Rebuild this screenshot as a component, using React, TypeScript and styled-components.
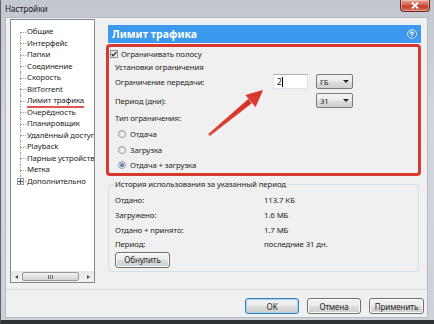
import React from 'react'
import styled, { createGlobalStyle } from 'styled-components'

const GlobalStyle = createGlobalStyle`
  html, body { margin: 0; padding: 0; background: #2e3136; }
  body {
    font-family: "Noto Sans", "Liberation Sans", sans-serif;
    font-size: 7.8px;
    letter-spacing: -0.1px;
    color: #1e1e1e;
  }
  * { box-sizing: border-box; }
`

const sections = [
  'Общие',
  'Интерфейс',
  'Папки',
  'Соединение',
  'Скорость',
  'BitTorrent',
  'Лимит трафика',
  'Очерёдность',
  'Планировщик',
  'Удалённый доступ',
  'Playback',
  'Парные устройства',
  'Метка',
  'Дополнительно',
]

const stats = [
  { label: 'Отдано:', value: '113.7 КБ' },
  { label: 'Загружено:', value: '1.6 МБ' },
  { label: 'Отдано + принято:', value: '1.7 МБ' },
  { label: 'Период:', value: 'последние 31 дн.' },
]

const Window = styled.div`
  position: relative;
  width: 434px;
  height: 324px;
  display: flex;
  flex-direction: column;
  background: linear-gradient(to bottom, #c3c8cf, #d2d7dd 40%, #cdd2d8);
  border-left: 1px solid #5d6269;
  border-bottom: 4px solid #2e3136;
  overflow: hidden;
`

const TitleBar = styled.div`
  height: 17px;
  flex: none;
  display: flex;
  align-items: center;
  padding-left: 4px;
`

const Title = styled.span`
  font-size: 8.3px;
  color: #1b1b1b;
`

const CloseButton = styled.div`
  margin-left: auto;
  margin-right: 4px;
  align-self: flex-start;
  width: 30px;
  height: 12px;
  display: flex;
  align-items: center;
  justify-content: center;
  border: 1px solid #6e2a22;
  border-top: none;
  border-radius: 0 0 4px 4px;
  background: linear-gradient(to bottom, #e8a294, #d1634f 45%, #c0392a 55%, #d9745c);
  box-shadow: inset 0 0 0 1px rgba(255, 255, 255, 0.35);
`

const Body = styled.div`
  flex: 1;
  display: flex;
  padding: 0 6px 2px 4px;
`

const Client = styled.div`
  flex: 1;
  display: flex;
  flex-direction: column;
  background: #f0f0f0;
  border: 1px solid #b4bbc3;
`

const Main = styled.div`
  height: 271px;
  flex: none;
  display: flex;
  gap: 13px;
  padding: 1px 6px 0 4px;
`

const Tree = styled.div`
  width: 85px;
  height: 264px;
  display: flex;
  flex-direction: column;
  background: #fff;
  border: 1px solid #828790;
`

const TreeList = styled.div`
  flex: 1;
  padding: 6px 0 0 9px;
  overflow: hidden;
`

const TreeItem = styled.div`
  height: 11.5px;
  display: flex;
  align-items: stretch;
  white-space: nowrap;
`

const Connector = styled.span<{ $pos: 'first' | 'mid' | 'last' }>`
  position: relative;
  flex: none;
  width: 7px;
  &::before {
    content: '';
    position: absolute;
    left: 0;
    top: ${p => (p.$pos === 'first' ? '50%' : '0')};
    bottom: ${p => (p.$pos === 'last' ? '50%' : '0')};
    border-left: 1px dotted #a3a3a3;
  }
  &::after {
    content: '';
    position: absolute;
    left: 0;
    right: 1px;
    top: 50%;
    border-top: 1px dotted #a3a3a3;
  }
`

const Expander = styled.span`
  position: absolute;
  left: -3px;
  top: 2.5px;
  width: 7px;
  height: 7px;
  z-index: 1;
  display: flex;
  align-items: center;
  justify-content: center;
  background: #fff;
  border: 1px solid #9b9b9b;
`

const TreeLabel = styled.span<{ $marked?: boolean }>`
  line-height: 11.5px;
  text-decoration: ${p => (p.$marked ? 'underline' : 'none')};
  text-decoration-color: #e2574c;
  text-decoration-thickness: 1.5px;
  text-underline-offset: 3px;
`

const ScrollBar = styled.div`
  height: 11px;
  flex: none;
  display: flex;
  align-items: center;
  background: linear-gradient(to bottom, #e6e6e6, #f4f4f4);
`

const ScrollArrow = styled.span<{ $dir: 'left' | 'right' }>`
  width: 11px;
  height: 11px;
  display: flex;
  align-items: center;
  justify-content: center;
  &::before {
    content: '';
    border-top: 2.5px solid transparent;
    border-bottom: 2.5px solid transparent;
    ${p => (p.$dir === 'left' ? 'border-right' : 'border-left')}: 3px solid #505050;
  }
`

const Thumb = styled.span`
  width: 57px;
  height: 9px;
  display: flex;
  align-items: center;
  justify-content: center;
  gap: 1px;
  border: 1px solid #979797;
  border-radius: 2px;
  background: linear-gradient(to bottom, #f4f4f4, #e2e2e2 50%, #d4d4d4);
`

const Grip = styled.span`
  width: 1px;
  height: 4px;
  background: #6b6b6b;
`

const TrackSpace = styled.span`
  flex: 1;
`

const Page = styled.div`
  position: relative;
  width: 313px;
  display: flex;
  flex-direction: column;
  padding-top: 6px;
`

const PageHeader = styled.div`
  height: 18px;
  display: flex;
  align-items: center;
  padding: 0 4px;
  background: #3b99ee;
  color: #fff;
  font-weight: 700;
  font-size: 10.5px;
  letter-spacing: 0;
`

const HelpIcon = styled.span`
  margin-left: auto;
  width: 10px;
  height: 10px;
  border-radius: 50%;
  display: flex;
  align-items: center;
  justify-content: center;
  font-size: 7px;
  font-weight: 700;
  color: #fff;
  background: radial-gradient(circle at 40% 30%, #8cc6f7, #2f7fd6 70%);
  border: 1px solid #cfe6fb;
`

const Highlight = styled.div`
  margin: 1px 0 0 -2px;
  height: 132px;
  border: 3px solid #d9382e;
  border-radius: 4px;
  display: flex;
  flex-direction: column;
`

const CheckRow = styled.label`
  height: 15px;
  display: flex;
  align-items: center;
  gap: 3px;
  padding-left: 1px;
`

const CheckBox = styled.span`
  width: 8px;
  height: 8px;
  display: flex;
  align-items: center;
  justify-content: center;
  border: 1px solid #8e8f8f;
  background: linear-gradient(to bottom right, #e6e6e6, #fbfbfb);
`

const SectionTitle = styled.div<{ $gap?: number }>`
  height: 14px;
  display: flex;
  align-items: center;
  padding-left: 6px;
  margin-top: ${p => p.$gap ?? 0}px;
`

const FieldGrid = styled.div`
  display: grid;
  grid-template-columns: 150px 35px 37px;
  grid-auto-rows: 16px;
  column-gap: 8px;
  row-gap: 3px;
  align-items: center;
  padding-left: 6px;
`

const TextInput = styled.div`
  height: 15px;
  display: flex;
  align-items: center;
  padding-left: 3px;
  background: #fff;
  border: 1px solid #e2e3ea;
  border-top-color: #abadb3;
  font-size: 8.5px;
`

const Caret = styled.span`
  width: 1px;
  height: 10px;
  background: #000;
`

const Select = styled.div`
  grid-column: 3;
  height: 15px;
  display: flex;
  align-items: center;
  padding: 0 3px;
  border: 1px solid #7a7a7a;
  border-radius: 2px;
  background: linear-gradient(to bottom, #f3f3f3, #ebebeb 50%, #dddddd 51%, #d0d0d0);
  &::after {
    content: '';
    margin-left: auto;
    border-left: 3px solid transparent;
    border-right: 3px solid transparent;
    border-top: 3px solid #222;
  }
`

const RadioList = styled.div`
  display: grid;
  grid-auto-rows: 15.5px;
  margin-top: 2px;
  padding-left: 9px;
`

const RadioRow = styled.label`
  display: flex;
  align-items: center;
  gap: 4px;
`

const Radio = styled.span<{ $checked?: boolean }>`
  width: 8px;
  height: 8px;
  border-radius: 50%;
  display: flex;
  align-items: center;
  justify-content: center;
  border: 1px solid #9a9a9a;
  background: linear-gradient(to bottom right, #dcdcdc, #fbfbfb);
  &::after {
    content: '';
    display: ${p => (p.$checked ? 'block' : 'none')};
    width: 4px;
    height: 4px;
    border-radius: 50%;
    background: radial-gradient(circle at 35% 35%, #6ea2cf, #1f4f7f);
  }
`

const GroupBox = styled.fieldset`
  margin: 3px 0 0 0;
  min-width: 0;
  width: 311px;
  padding: 3px 0 3px 6px;
  border: 1px solid #d5dfe5;
  border-radius: 3px;
`

const Legend = styled.legend`
  padding: 0 1px;
  margin-left: -1px;
  line-height: 11px;
`

const StatGrid = styled.div`
  display: grid;
  grid-template-columns: 149px 1fr;
  grid-auto-rows: 14.7px;
  align-items: center;
`

const Separator = styled.div`
  height: 1px;
  flex: none;
  background: #dadada;
`

const Footer = styled.div`
  display: flex;
  justify-content: flex-end;
  gap: 8px;
  padding: 8px 3px 0 0;
`

const Button = styled.div<{ $width: number; $default?: boolean }>`
  width: ${p => p.$width}px;
  height: 16px;
  display: flex;
  align-items: center;
  justify-content: center;
  font-size: 8px;
  border: 1px solid ${p => (p.$default ? '#3c7fb1' : '#707070')};
  border-radius: 3px;
  background: linear-gradient(to bottom, #f2f2f2, #ebebeb 50%, #dddddd 51%, #cfcfcf);
  box-shadow: inset 0 0 0 1px ${p => (p.$default ? '#9fd3f3' : '#fcfcfc')};
`

const ArrowOverlay = styled.svg`
  position: absolute;
  left: 200px;
  top: 84px;
  width: 70px;
  height: 60px;
  pointer-events: none;
`

export default function App() {
  return (
    <>
      <GlobalStyle />
      <Window>
        <TitleBar>
          <Title>Настройки</Title>
          <CloseButton>
            <svg width="8" height="7" viewBox="0 0 8 7">
              <path d="M1 0.5 L7 6.5 M7 0.5 L1 6.5" stroke="#fff" strokeWidth="1.8" />
            </svg>
          </CloseButton>
        </TitleBar>
        <Body>
          <Client>
            <Main>
              <Tree>
                <TreeList>
                  {sections.map((name, i) => {
                    const pos = i === 0 ? 'first' : i === sections.length - 1 ? 'last' : 'mid'
                    return (
                      <TreeItem key={name}>
                        <Connector $pos={pos}>
                          {pos === 'last' && (
                            <Expander>
                              <svg width="5" height="5" viewBox="0 0 5 5">
                                <path d="M0 2.5 H5 M2.5 0 V5" stroke="#3d5a80" strokeWidth="1" />
                              </svg>
                            </Expander>
                          )}
                        </Connector>
                        <TreeLabel $marked={name === 'Лимит трафика'}>{name}</TreeLabel>
                      </TreeItem>
                    )
                  })}
                </TreeList>
                <ScrollBar>
                  <ScrollArrow $dir="left" />
                  <Thumb>
                    <Grip />
                    <Grip />
                    <Grip />
                  </Thumb>
                  <TrackSpace />
                  <ScrollArrow $dir="right" />
                </ScrollBar>
              </Tree>

              <Page>
                <PageHeader>
                  Лимит трафика
                  <HelpIcon>?</HelpIcon>
                </PageHeader>

                <Highlight>
                  <CheckRow>
                    <CheckBox>
                      <svg width="6" height="6" viewBox="0 0 6 6">
                        <path d="M0.6 3 L2.3 4.8 L5.4 0.8" fill="none" stroke="#2b2b2b" strokeWidth="1.3" />
                      </svg>
                    </CheckBox>
                    Ограничивать полосу
                  </CheckRow>
                  <SectionTitle>Установки ограничения</SectionTitle>
                  <FieldGrid>
                    <span>Ограничение передачи:</span>
                    <TextInput>
                      2<Caret />
                    </TextInput>
                    <Select>ГБ</Select>
                    <span>Период (дни):</span>
                    <Select>31</Select>
                  </FieldGrid>
                  <SectionTitle $gap={3}>Тип ограничения:</SectionTitle>
                  <RadioList>
                    <RadioRow>
                      <Radio />
                      Отдача
                    </RadioRow>
                    <RadioRow>
                      <Radio />
                      Загрузка
                    </RadioRow>
                    <RadioRow>
                      <Radio $checked />
                      Отдача + загрузка
                    </RadioRow>
                  </RadioList>
                </Highlight>

                <GroupBox>
                  <Legend>История использования за указанный период</Legend>
                  <StatGrid>
                    {stats.map(s => (
                      <React.Fragment key={s.label}>
                        <span>{s.label}</span>
                        <span>{s.value}</span>
                      </React.Fragment>
                    ))}
                  </StatGrid>
                  <Button $width={55}>Обнулить</Button>
                </GroupBox>
              </Page>
            </Main>
            <Separator />
            <Footer>
              <Button $width={54} $default>OK</Button>
              <Button $width={54}>Отмена</Button>
              <Button $width={55}>Применить</Button>
            </Footer>
          </Client>
        </Body>

        <ArrowOverlay viewBox="0 0 70 60">
          <defs>
            <linearGradient id="arrowFill" x1="0" y1="1" x2="1" y2="0">
              <stop offset="0" stopColor="#e0483b" />
              <stop offset="1" stopColor="#d42f22" />
            </linearGradient>
          </defs>
          <polygon points="7.2,50.1 8.8,51.9 50.8,19.3 47.3,14.9" fill="url(#arrowFill)" />
          <polygon points="62,6 44.4,11 54.6,23.2" fill="url(#arrowFill)" />
        </ArrowOverlay>
      </Window>
    </>
  )
}
